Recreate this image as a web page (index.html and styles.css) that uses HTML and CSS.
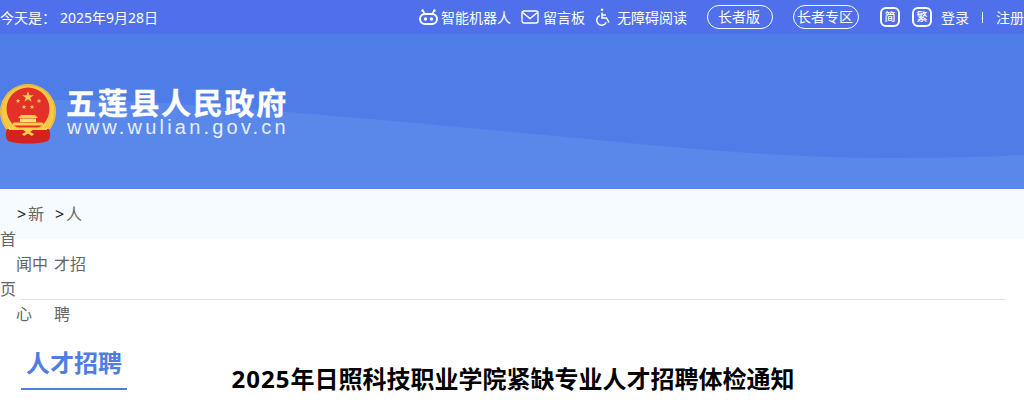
FILE: index.html
```html
<!DOCTYPE html>
<html lang="zh-CN">
  <head>
    <meta charset="UTF-8" />
    <title>2025年日照科技职业学院紧缺专业人才招聘体检通知</title>
    <link rel="stylesheet" href="styles.css">
  </head>
  <body>
    <div class="topbar">
      <div class="today"><span class="today-label">今天是：</span><span>2025年9月28日</span></div>
      <div class="tools">
        <a class="tool tool-robot">
          <svg width="19" height="16" viewBox="0 0 19 16" fill="none">
            <rect x="1" y="5" width="17" height="10" rx="5" stroke="#fff" stroke-width="2"/>
            <path d="M5.500 4.500 4 1.800M13.500 4.500 15 1.800" stroke="#fff" stroke-width="1.600" stroke-linecap="round"/>
            <circle cx="3.600" cy="1.600" r="1.300" fill="#fff"/>
            <circle cx="15.400" cy="1.600" r="1.300" fill="#fff"/>
            <circle cx="6.500" cy="10" r="1.700" fill="#fff"/>
            <circle cx="12.500" cy="10" r="1.700" fill="#fff"/>
          </svg>
          智能机器人
        </a>
        <a class="tool tool-msg">
          <svg width="18" height="14" viewBox="0 0 18 14" fill="none" stroke="#fff" stroke-width="1.400">
            <rect x="1" y="1" width="16" height="12" rx="2"/>
            <path d="m1.500 2.500 7.500 6 7.500-6"/>
          </svg>
          留言板
        </a>
        <a class="tool tool-access">
          <svg width="16" height="18" viewBox="0 0 16 18" fill="none" stroke="#fff" stroke-width="1.500">
            <circle cx="7" cy="1.800" r="1.300" fill="#fff" stroke="none"/>
            <path d="M7 4.500V10h4.500l2.500 4.500"/>
            <path d="M7 7h4"/>
            <path d="M4.700 7.600a5 5 0 1 0 6.600 6.600"/>
          </svg>
          无障碍阅读
        </a>
        <a class="pill">长者版</a>
        <a class="pill pill-tight">长者专区</a>
        <a class="lang">简</a>
        <a class="lang lang-fan">繁</a>
        <a class="login">登录</a>
        <i class="sep"></i>
        <a class="register">注册</a>
      </div>
    </div>

    <div class="banner">
      <svg class="wave" width="1024" height="155" viewBox="0 0 1024 155" preserveAspectRatio="none">
        <path d="M0 66C70 66 130 66 190 71 300 78 450 92 577 104 680 114 780 124 900 124 950 124 990 123 1024 121V155H0Z" fill="#5987ea"/>
      </svg>
      <div class="logo">
        <svg class="emblem" width="56" height="60" viewBox="0 0 56 60">
          <defs>
            <polygon id="star" points="0,-1 .225,-.309 .951,-.309 .363,.118 .588,.809 0,.382 -.588,.809 -.363,.118 -.951,-.309 -.225,-.309" fill="#f8d24e"/>
          </defs>
          <circle cx="28" cy="28" r="28" fill="#f5c945"/>
          <circle cx="28" cy="28" r="27" fill="none" stroke="#eab035" stroke-width="1"/>
          <circle cx="28" cy="25" r="21.500" fill="#e3312a"/>
          <path d="M7 45C5 50 6 55 8 57c6 2 12 2.500 20 2.500S42 59 48 57c2-2 3-7 1-12Z" fill="#d3221f"/>
          <use href="#star" transform="translate(28 13) scale(6)"/>
          <use href="#star" transform="translate(18 17) scale(2.600)"/>
          <use href="#star" transform="translate(39 17) scale(2.600)"/>
          <use href="#star" transform="translate(24 23) scale(2.600)"/>
          <use href="#star" transform="translate(32 23) scale(2.600)"/>
          <path d="M21 31h14l3 3H18Z" fill="#f8d24e"/>
          <path d="M20 34.500h16V38H20Z" fill="#fbe07a"/>
          <path d="M14 38.500h28l3 3H11Z" fill="#f8d24e"/>
          <path d="M9 43.500h38v2.500H33l-3 2 4 2-2 2-4-2.500L24 52l-2-2 4-2-3-2H9Z" fill="#f8d24e"/>
        </svg>
        <div class="logo-text">
          <div class="logo-name">五莲县人民政府</div>
          <div class="logo-url">www.wulian.gov.cn</div>
        </div>
      </div>
    </div>

    <div class="location-band">
      <div class="location">
        <div class="crumbs">
          <a class="crumb-home">首页</a>
          <a class="crumb-item"><b>&gt;</b>新闻中心</a>
          <a class="crumb-item"><b>&gt;</b>人才招聘</a>
        </div>
      </div>
    </div>

    <div class="content">
      <h2 class="side-title">人才招聘</h2>
      <h1 class="article-title"><span class="title-year">2025</span>年日照科技职业学院紧缺专业人才招聘体检通知</h1>
    </div>
  </body>
</html>
```

FILE: styles.css
```css
* {
  box-sizing: border-box;
}
html,
body {
  height: 400px;
  overflow: hidden;
}
body {
  margin: 0;
  font-family: "Noto Sans", "Noto Sans CJK SC", sans-serif;
  font-size: 14px;
  color: #666;
  background: #fff;
}
.topbar {
  height: 34px;
  display: flex;
  align-items: center;
  justify-content: space-between;
  background: #4f70ea;
  color: #fff;
}
.today-label {
  margin-right: 4px;
}
.tools {
  display: flex;
  align-items: center;
  white-space: nowrap;
}
.tool {
  display: flex;
  align-items: center;
  gap: 3px;
  margin-right: 10px;
}
.tool-msg {
  gap: 4px;
}
.tool-access {
  gap: 6px;
  margin-right: 20px;
}
.pill {
  width: 66px;
  height: 24px;
  line-height: 21px;
  margin-right: 20px;
  padding-right: 2px;
  border: 1px solid #fff;
  border-radius: 12px;
  text-align: center;
}
.pill-tight {
  margin-right: 21px;
}
.lang {
  width: 20px;
  height: 20px;
  line-height: 15px;
  margin-right: 12px;
  border: 2px solid #fff;
  border-radius: 6px;
  font-size: 11px;
  font-weight: 500;
  text-align: center;
}
.lang-fan {
  margin-right: 9px;
}
.sep {
  width: 1px;
  height: 11px;
  margin: 0 13px;
  background: #fff;
}
.banner {
  position: relative;
  height: 155px;
  background: #4e7de8;
}
.wave {
  position: absolute;
  left: 0;
  top: 0;
}
.logo {
  position: relative;
  display: flex;
  align-items: flex-start;
  padding-top: 50px;
}
.logo-text {
  margin-left: 11px;
  color: #fff;
}
.logo-name {
  height: 32px;
  margin-top: 3px;
  margin-left: -1px;
  line-height: 32px;
  font-size: 30px;
  font-weight: 700;
  letter-spacing: 1.700px;
  white-space: nowrap;
  -webkit-text-stroke: 0.4px #fff;
}
.logo-url {
  height: 18px;
  line-height: 16px;
  font-family: "Liberation Sans", Arial, sans-serif;
  font-size: 20px;
  letter-spacing: 3.200px;
  color: #e6eefc;
  white-space: nowrap;
}
.location-band {
  background: linear-gradient(#f5fbff 50px, #fff 50px);
}
.location {
  height: 111px;
  margin: 0 19px 0 21px;
  border-bottom: 1px solid #ddd;
}
.crumbs {
  display: flex;
  align-items: center;
  height: 150px;
  margin-left: -21px;
  font-size: 16px;
  line-height: 50px;
}
.crumb-home {
  width: 16px;
}
.crumb-item {
  width: 32px;
  margin-right: 6px;
}
.crumb-item b {
  display: inline-block;
  width: 12px;
  padding-left: 1px;
  font-weight: 400;
  color: #222;
}
.content {
  display: grid;
  margin: 40px 19px 0 21px;
}
.side-title,
.article-title {
  grid-area: 1 / 1;
  margin: 0;
}
.side-title {
  justify-self: start;
  width: 106px;
  height: 50px;
  line-height: 46px;
  border-bottom: 2px solid #4f7de0;
  font-size: 24px;
  font-weight: 700;
  color: #4f7de0;
  text-align: center;
}
.article-title {
  margin-top: 21px;
  line-height: 36px;
  font-size: 24px;
  font-weight: 700;
  color: #000;
  text-align: center;
}
.title-year {
  letter-spacing: 1px;
}
```
